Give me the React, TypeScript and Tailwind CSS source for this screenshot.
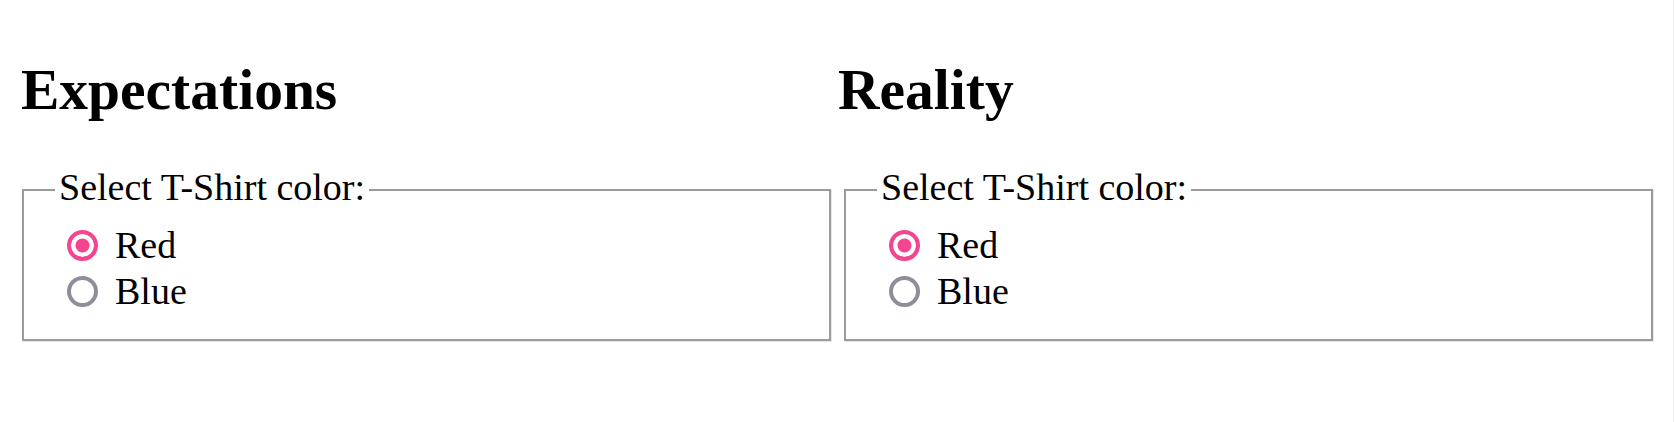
import { useState } from 'react';

// Two side-by-side panels, each with a heading and a T-shirt colour fieldset.

const colors = ['Red', 'Blue'];

function ColorFieldset({ name, shift }: { name: string; shift: string }) {
  const [value, setValue] = useState('Red');
  return (
    <fieldset className={`mt-[43px] w-[809px] border-2 border-[#9b9b9b] shadow-[1px_1px_0_#e6e6e6] pl-[31px] pr-[30px] pt-[8px] pb-[25px] ${shift}`}>
      <legend className="px-[4px] pb-[5px] text-[38px] leading-[44px]">Select T-Shirt color:</legend>
      {colors.map((c) => (
        <label key={c} className="flex h-[46px] items-center text-[38px] leading-[46px]">
          <input
            type="radio"
            name={name}
            value={c}
            checked={value === c}
            onChange={() => setValue(c)}
            className="ml-[12px] mr-[17px] h-[31px] w-[31px] shrink-0 appearance-none rounded-full border-4 border-[#8e8d99] bg-white checked:border-[#f3468f] checked:bg-[#f3468f] checked:shadow-[inset_0_0_0_4.5px_#ffffff]"
          />
          <span>{c}</span>
        </label>
      ))}
    </fieldset>
  );
}

export default function App() {
  return (
    <div
      className="flex h-[422px] w-[1674px] border-r border-[#ededed] bg-white pl-[21px] pt-[58px] text-black"
      style={{ fontFamily: '"Liberation Serif", "Times New Roman", serif' }}
    >
      <div className="w-[817px] shrink-0">
        <h2 className="text-[57.5px] font-bold leading-[64px]">Expectations</h2>
        <ColorFieldset name="expect" shift="ml-[1px]" />
      </div>
      <div className="flex-1">
        <h2 className="text-[57.5px] font-bold leading-[64px]">Reality</h2>
        <ColorFieldset name="reality" shift="ml-[6px]" />
      </div>
    </div>
  );
}
